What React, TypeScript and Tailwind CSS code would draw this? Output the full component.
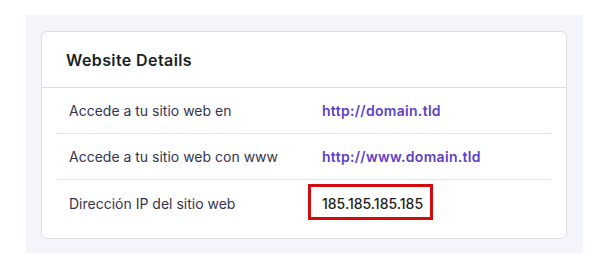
export default function App() {
  const rows = [
    { label: 'Accede a tu sitio web en', value: 'http://domain.tld', link: true },
    { label: 'Accede a tu sitio web con www', value: 'http://www.domain.tld', link: true },
    { label: 'Dirección IP del sitio web', value: '185.185.185.185', link: false },
  ]

  return (
    <main className="min-h-screen bg-white pt-[15px] pl-[26px]" style={{ fontFamily: 'Inter, "Noto Sans", sans-serif' }}>
      <div className="w-[557px] h-[238px] bg-[#f4f4fb] pt-[16px] pl-[15px]">
        <div className="w-[526px] h-[208px] bg-white border border-[#dcdce3] rounded-[6px]">
          {/* Header */}
          <div className="h-[56px] flex items-center pl-[24px] border-b border-[#dcdce3]">
            <h2 className="text-[16px] font-semibold tracking-[0.4px] text-[#1d1e20]">Website Details</h2>
          </div>

          {/* Rows */}
          <div className="mx-[15px]">
            {rows.map((row, i) => (
              <div
                key={row.label}
                className={`h-[46px] flex items-center pl-[12px] ${i < rows.length - 1 ? 'border-b border-[#e3e3e8]' : ''}`}
              >
                <span className="w-[253px] text-[14px] text-[#36344d]">{row.label}</span>
                {row.link ? (
                  <span className="text-[14px] font-semibold tracking-[0.3px] text-[#5d40c8]">{row.value}</span>
                ) : (
                  <span className="relative text-[14px] font-medium text-[#1d1e20]">
                    {row.value}
                    <span className="absolute -left-[14px] -top-[9px] w-[125px] h-[36px] border-[3px] border-[#d40b0b]" />
                  </span>
                )}
              </div>
            ))}
          </div>
        </div>
      </div>
    </main>
  )
}
